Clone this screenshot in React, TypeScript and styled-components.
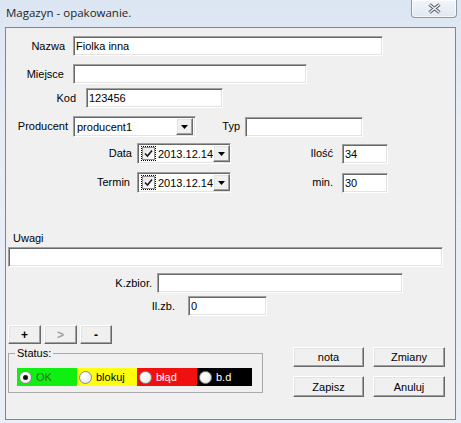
import React from 'react'
import styled, { createGlobalStyle, css } from 'styled-components'

const GlobalStyle = createGlobalStyle`
  html, body {
    margin: 0;
    padding: 0;
    background: #ffffff;
  }
  * {
    box-sizing: border-box;
  }
`

const sunken = css`
  border-style: solid;
  border-width: 1px;
  border-color: #a0a0a0 #ffffff #ffffff #a0a0a0;
  box-shadow: inset 1px 1px 0 #696969, inset -1px -1px 0 #e3e3e3;
  background: #ffffff;
`

const raised = css`
  border-style: solid;
  border-width: 1px;
  border-color: #ffffff #696969 #696969 #ffffff;
  box-shadow: inset -1px -1px 0 #a0a0a0, inset 1px 1px 0 #e3e3e3;
  background: #f0f0f0;
`

const Window = styled.div`
  width: 461px;
  height: 423px;
  display: flex;
  flex-direction: column;
  background: linear-gradient(to bottom, #dce6f2 0%, #e6edf5 30%, #e9eff6 100%);
  font-family: 'Liberation Sans', Arial, sans-serif;
  font-size: 11px;
  color: #000000;
`

const TitleBar = styled.div`
  height: 27px;
  flex-shrink: 0;
  display: flex;
  justify-content: space-between;
  align-items: flex-start;
  padding-left: 6px;
`

const Title = styled.span`
  font-family: 'Open Sans', 'Noto Sans', sans-serif;
  font-size: 11.5px;
  line-height: 16px;
  margin-top: 5px;
  color: #1e1e1e;
`

const CloseButton = styled.div`
  width: 46px;
  height: 18px;
  margin-right: 4px;
  display: flex;
  align-items: center;
  justify-content: center;
  border: 1px solid #8b98a9;
  border-top: none;
  border-radius: 0 0 4px 4px;
  background: linear-gradient(to bottom, #f1f5fa, #e1e8f1);
  box-shadow: inset 0 0 0 1px rgba(255, 255, 255, 0.7);
`

const Client = styled.div`
  flex: 1;
  margin: 0 5px 3px 5px;
  border: 1px solid #7b8796;
  background: #f0f0f0;
  display: flex;
  flex-direction: column;
  align-items: flex-start;
`

const Row = styled.div<{ $top: number; $indent?: number }>`
  display: flex;
  align-items: center;
  margin-top: ${(p) => p.$top}px;
  padding-left: ${(p) => p.$indent ?? 0}px;
`

const Label = styled.span<{ $w?: number; $gap: number }>`
  width: ${(p) => (p.$w ? `${p.$w}px` : 'auto')};
  margin-right: ${(p) => p.$gap}px;
  text-align: right;
  white-space: nowrap;
  flex-shrink: 0;
  line-height: 13px;
`

const Edit = styled.input<{ $w: number; $h?: number }>`
  ${sunken};
  width: ${(p) => p.$w}px;
  height: ${(p) => p.$h ?? 20}px;
  padding: 0 2px;
  margin: 0;
  font-family: inherit;
  font-size: 11px;
  color: #000000;
  outline: none;
`

const Combo = styled.div<{ $w: number }>`
  ${sunken};
  width: ${(p) => p.$w}px;
  height: 21px;
  padding: 2px;
  display: flex;
  align-items: center;
`

const ComboText = styled.span`
  flex: 1;
  padding-left: 1px;
  white-space: nowrap;
`

const DropButton = styled.span`
  ${raised};
  width: 17px;
  height: 17px;
  flex-shrink: 0;
  display: flex;
  align-items: center;
  justify-content: center;
  margin-left: auto;
`

const FocusRect = styled.span`
  border: 1px dotted #000000;
  margin-left: 1px;
  display: flex;
`

const CheckBox = styled.span`
  width: 13px;
  height: 13px;
  border: 1px solid #8e8f8f;
  background: linear-gradient(135deg, #e6e6e6, #ffffff);
  display: flex;
  align-items: center;
  justify-content: center;
`

const PickerText = styled.span`
  margin-left: 2px;
  white-space: nowrap;
`

const SectionLabel = styled.div<{ $top: number }>`
  margin-top: ${(p) => p.$top}px;
  padding-left: 7px;
  line-height: 13px;
`

const Memo = styled.textarea`
  ${sunken};
  width: 435px;
  height: 20px;
  margin: 2px 0 0 2px;
  padding: 1px 2px;
  resize: none;
  overflow: hidden;
  font-family: inherit;
  font-size: 11px;
  outline: none;
`

const ButtonBar = styled.div`
  display: flex;
  gap: 3px;
  margin: 9px 0 0 2px;
`

const ToolButton = styled.button<{ $w: number; $disabled?: boolean }>`
  ${raised};
  width: ${(p) => p.$w}px;
  height: 19px;
  padding: 0;
  font-family: inherit;
  font-size: 12px;
  font-weight: bold;
  color: ${(p) => (p.$disabled ? '#a0a0a0' : '#000000')};
  line-height: 1;
`

const Bottom = styled.div`
  display: flex;
  align-items: flex-start;
  margin: 3px 0 0 2px;
`

const GroupBox = styled.fieldset`
  width: 255px;
  margin: 0;
  padding: 0 8px 6px 8px;
  border: 1px solid #a9a9a9;
  min-width: 0;
`

const Legend = styled.legend`
  padding: 0 2px;
  margin-left: -2px;
  line-height: 13px;
`

const StatusStrip = styled.div`
  display: flex;
  margin-top: 8px;
`

const StatusOption = styled.label<{ $bg: string; $fg: string; $w: number }>`
  width: ${(p) => p.$w}px;
  height: 18px;
  display: flex;
  align-items: center;
  gap: 4px;
  padding-left: 2px;
  background: ${(p) => p.$bg};
  color: ${(p) => p.$fg};
`

const Radio = styled.span<{ $checked?: boolean }>`
  width: 13px;
  height: 13px;
  flex-shrink: 0;
  border-radius: 50%;
  border: 1px solid #8a8a8a;
  background: radial-gradient(circle at 40% 35%, #ffffff 0%, #f2f2f2 55%, #d4d4d4 100%);
  display: flex;
  align-items: center;
  justify-content: center;

  &::after {
    content: '';
    display: ${(p) => (p.$checked ? 'block' : 'none')};
    width: 5px;
    height: 5px;
    border-radius: 50%;
    background: #111111;
  }
`

const ActionGrid = styled.div`
  display: grid;
  grid-template-columns: 71px 72px;
  grid-template-rows: 20px 21px;
  column-gap: 9px;
  row-gap: 9px;
  margin-left: 30px;
`

const PushButton = styled.button`
  ${raised};
  padding: 0;
  font-family: inherit;
  font-size: 11px;
  color: #000000;
`

function Arrow() {
  return (
    <svg width='7' height='4' viewBox='0 0 7 4'>
      <polygon points='0,0 7,0 3.5,4' fill='#000' />
    </svg>
  )
}

function Check() {
  return (
    <svg width='9' height='9' viewBox='0 0 9 9'>
      <path d='M1 4.5 L3.5 7 L8 1.5' stroke='#1a1a1a' strokeWidth='1.6' fill='none' />
    </svg>
  )
}

function DatePicker({ value }: { value: string }) {
  return (
    <Combo $w={94}>
      <FocusRect>
        <CheckBox>
          <Check />
        </CheckBox>
      </FocusRect>
      <PickerText>{value}</PickerText>
      <DropButton>
        <Arrow />
      </DropButton>
    </Combo>
  )
}

const statuses = [
  { text: 'OK', bg: '#10f010', fg: '#2f6f2f', w: 60, checked: true },
  { text: 'blokuj', bg: '#ffff10', fg: '#000000', w: 60 },
  { text: 'błąd', bg: '#f01010', fg: '#ffffff', w: 60 },
  { text: 'b.d', bg: '#000000', fg: '#ffffff', w: 55 },
]

export default function App() {
  return (
    <>
      <GlobalStyle />
      <Window>
        <TitleBar>
          <Title>Magazyn - opakowanie.</Title>
          <CloseButton>
            <svg width='15' height='11' viewBox='0 0 15 11'>
              <path d='M2.5 1.5 L12.5 9.5 M12.5 1.5 L2.5 9.5' stroke='#5a5f66' strokeWidth='3.4' />
              <path d='M2.5 1.5 L12.5 9.5 M12.5 1.5 L2.5 9.5' stroke='#f4f6f8' strokeWidth='1.3' />
            </svg>
          </CloseButton>
        </TitleBar>

        <Client>
          <Row $top={8}>
            <Label $w={59} $gap={8}>Nazwa</Label>
            <Edit $w={310} value='Fiolka inna' readOnly />
          </Row>
          <Row $top={8}>
            <Label $w={58} $gap={9}>Miejsce</Label>
            <Edit $w={234} value='' readOnly />
          </Row>
          <Row $top={4}>
            <Label $w={70} $gap={10}>Kod</Label>
            <Edit $w={137} value='123456' readOnly />
          </Row>
          <Row $top={8}>
            <Label $w={62} $gap={5}>Producent</Label>
            <Combo $w={123}>
              <ComboText>producent1</ComboText>
              <DropButton>
                <Arrow />
              </DropButton>
            </Combo>
            <Label $w={44} $gap={5}>Typ</Label>
            <Edit $w={118} value='' readOnly />
          </Row>
          <Row $top={6}>
            <Label $w={126} $gap={5}>Data</Label>
            <DatePicker value='2013.12.14' />
            <Label $w={102} $gap={9}>Ilość</Label>
            <Edit $w={46} value='34' readOnly />
          </Row>
          <Row $top={8}>
            <Label $w={124} $gap={7}>Termin</Label>
            <DatePicker value='2013.12.14' />
            <Label $w={102} $gap={9}>min.</Label>
            <Edit $w={46} value='30' readOnly />
          </Row>

          <SectionLabel $top={39}>Uwagi</SectionLabel>
          <Memo readOnly value='' />

          <Row $top={6}>
            <Label $w={146} $gap={5}>K.zbior.</Label>
            <Edit $w={246} value='' readOnly />
          </Row>
          <Row $top={3}>
            <Label $w={169} $gap={13}>Il.zb.</Label>
            <Edit $w={79} value='0' readOnly />
          </Row>

          <ButtonBar>
            <ToolButton $w={33}>+</ToolButton>
            <ToolButton $w={33} $disabled>&gt;</ToolButton>
            <ToolButton $w={32}>-</ToolButton>
          </ButtonBar>

          <Bottom>
            <GroupBox>
              <Legend>Status:</Legend>
              <StatusStrip>
                {statuses.map((s) => (
                  <StatusOption key={s.text} $bg={s.bg} $fg={s.fg} $w={s.w}>
                    <Radio $checked={s.checked} />
                    {s.text}
                  </StatusOption>
                ))}
              </StatusStrip>
            </GroupBox>
            <ActionGrid>
              <PushButton>nota</PushButton>
              <PushButton>Zmiany</PushButton>
              <PushButton>Zapisz</PushButton>
              <PushButton>Anuluj</PushButton>
            </ActionGrid>
          </Bottom>
        </Client>
      </Window>
    </>
  )
}
